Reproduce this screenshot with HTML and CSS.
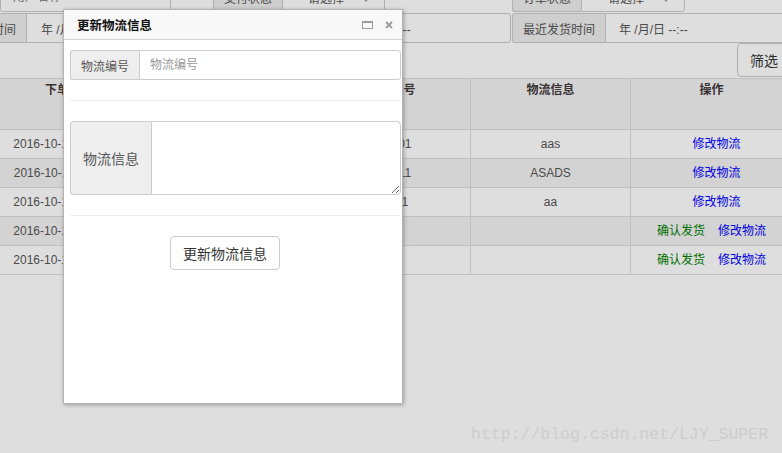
FILE: index.html
```
<!DOCTYPE html>
<html lang="zh-CN">
<head>
<meta charset="utf-8">
<title>订单管理</title>
<link rel="stylesheet" href="styles.css">
</head>
<body>
<div class="page">
  <div class="filters">
    <div class="frow r1">
      <input class="fc w-user" type="text" placeholder="用户名称">
      <div class="ig ig-pay">
        <span class="addon">支付状态</span>
        <span class="fc select">请选择<i class="caret"></i></span>
      </div>
      <div class="ig ig-order">
        <span class="addon">订单状态</span>
        <span class="fc select select-b">请选择<i class="caret"></i></span>
      </div>
    </div>
    <div class="frow r2">
      <div class="ig ig-time">
        <span class="addon">下单时间</span>
        <span class="fc date d1">年 /月/日 --:--</span>
        <span class="addon mid">至</span>
        <span class="fc date d2">年 /月/日 --:--</span>
      </div>
      <div class="ig ig-ship">
        <span class="addon">最近发货时间</span>
        <span class="fc date d3">年 /月/日 --:--</span>
      </div>
    </div>
    <div class="frow r3">
      <button class="btn btn-filter" type="button">筛选</button>
    </div>
  </div>

  <table class="grid">
    <thead>
      <tr>
        <th class="c1">下单时间</th>
        <th class="c2">用户名称</th>
        <th class="c3">物流编号</th>
        <th class="c4">物流信息</th>
        <th class="c5">操作</th>
      </tr>
    </thead>
    <tbody>
      <tr>
        <td>2016-10-12 10:23:45</td>
        <td>张三</td>
        <td>100001</td>
        <td>aas</td>
        <td><a class="op op-edit op-single">修改物流</a></td>
      </tr>
      <tr>
        <td>2016-10-12 11:02:10</td>
        <td>李四</td>
        <td>100011</td>
        <td>ASADS</td>
        <td><a class="op op-edit op-single">修改物流</a></td>
      </tr>
      <tr>
        <td>2016-10-13 09:15:32</td>
        <td>王五</td>
        <td>12341</td>
        <td>aa</td>
        <td><a class="op op-edit op-single">修改物流</a></td>
      </tr>
      <tr>
        <td>2016-10-14 14:20:05</td>
        <td>赵六</td>
        <td></td>
        <td></td>
        <td><a class="op op-confirm">确认发货</a><a class="op op-edit">修改物流</a></td>
      </tr>
      <tr>
        <td>2016-10-15 16:45:19</td>
        <td>孙七</td>
        <td></td>
        <td></td>
        <td><a class="op op-confirm">确认发货</a><a class="op op-edit">修改物流</a></td>
      </tr>
    </tbody>
  </table>
</div>

<div class="layer">
  <div class="layer-title">
    <span class="layer-name">更新物流信息</span>
    <span class="layer-ops">
      <svg class="ico-max" width="11" height="8" viewBox="0 0 11 8"><rect x="0.5" y="1" width="10" height="6.5" fill="none" stroke="#9c9c9c"/><rect x="0" y="0" width="11" height="2" fill="#9c9c9c"/></svg>
      <svg class="ico-close" width="8" height="8" viewBox="0 0 8 8"><path d="M1 1L7 7M7 1L1 7" stroke="#9c9c9c" stroke-width="1.8"/></svg>
    </span>
  </div>
  <div class="layer-body">
    <div class="ig ig-sm">
      <span class="lb-addon">物流编号</span>
      <input class="lb-input" type="text" placeholder="物流编号">
    </div>
    <hr>
    <div class="ig ig-lg">
      <span class="lb-addon">物流信息</span>
      <textarea class="lb-input" rows="3"></textarea>
    </div>
    <hr>
    <div class="actions">
      <button class="lb-btn" type="button">更新物流信息</button>
    </div>
  </div>
</div>

<div class="watermark">http://blog.csdn.net/LJY_SUPER</div>
</body>
</html>
```

FILE: styles.css
```
* { box-sizing: border-box; }
html, body { margin: 0; height: 100%; }
body {
  overflow: hidden;
  background: #dedede;
  font-family: "Liberation Sans", Arial, "Noto Sans CJK SC", sans-serif;
  font-size: 12px;
  color: #4a4a4a;
  position: relative;
}

/* background page (shown dimmed behind the dialog) */
.page { width: 792px; margin-top: -18px; }

.frow { display: flex; height: 30px; }
.r2 { margin-top: 1px; }
.r3 { height: 34px; justify-content: flex-end; padding-right: 1px; }

.ig { display: flex; height: 100%; }
.addon {
  display: flex;
  align-items: center;
  padding: 0 10px;
  background: #cfcfcf;
  border: 1px solid #b1b1b1;
  white-space: nowrap;
  color: #4a4a4a;
}
.fc {
  display: flex;
  align-items: center;
  border: 1px solid #b1b1b1;
  background: #dedede;
  padding: 0 10px;
  font: inherit;
  color: #4a4a4a;
  outline: none;
}
.fc::placeholder { color: #686868; }
.ig > .addon:first-child { border-right: 0; border-radius: 3px 0 0 3px; }
.ig > .fc:last-child { border-radius: 0 3px 3px 0; }
.addon.mid { border-left: 0; border-right: 0; width: 36px; justify-content: center; padding: 0; }

.w-user { width: 171px; height: 30px; border-radius: 3px; padding-left: 12px; }
.ig-pay { margin-left: 42px; }
.ig-order { margin-left: 127px; }
.select { position: relative; width: 103px; padding-left: 25px; }
.select-b { width: 104px; padding-left: 26px; }
.caret {
  position: absolute;
  right: 14px;
  top: 14px;
  border-top: 5px solid #858585;
  border-left: 4px solid transparent;
  border-right: 4px solid transparent;
}

.ig-time { margin-left: -43px; }
.d1 { width: 266px; padding-left: 14px; }
.d2 { width: 183px; padding-left: 13px; }
.ig-ship { margin-left: 1px; }
.d3 { width: 187px; padding-left: 13px; }

.btn {
  height: 34px;
  padding: 0 12px;
  border: 1px solid #b1b1b1;
  border-radius: 4px;
  background: #dedede;
  color: #2c2c2c;
  font-family: "Liberation Sans", Arial, "Noto Sans CJK SC", sans-serif;
  font-size: 14px;
}

.grid {
  width: 792px;
  table-layout: fixed;
  border-collapse: separate;
  border-spacing: 0;
  margin-top: 1px;
  border-top: 1px solid #c0c0c0;
}
.grid th, .grid td {
  border-bottom: 1px solid #c0c0c0;
  border-left: 1px solid #c0c0c0;
  text-align: center;
  white-space: nowrap;
  overflow: hidden;
}
.grid th:first-child, .grid td:first-child { border-left: 0; }
.grid th {
  height: 51px;
  padding: 3px 8px;
  line-height: 17px;
  vertical-align: top;
  background: #d3d3d3;
  color: #3a3232;
  font-weight: bold;
}
.grid td {
  height: 29px;
  padding: 5px 8px;
  line-height: 18px;
  color: #4a4a4a;
}
.grid tbody tr:nth-child(even) td { background: #d3d3d3; }
.c1 { width: 138px; }
.c2 { width: 174px; }
.c3 { width: 158px; }
.c4 { width: 160px; }
.c5 { width: 162px; }

.op { text-decoration: none; cursor: pointer; }
.op-edit { color: #0000de; }
.op-confirm { color: #006f00; margin-right: 13px; }
.op-single { margin-left: 10px; }

/* dialog */
.layer {
  position: absolute;
  z-index: 2;
  left: 63px;
  top: 9px;
  width: 340px;
  height: 395px;
  background: #ffffff;
  border: 1px solid #b4b4b4;
  box-shadow: 1px 1px 4px rgba(0, 0, 0, 0.3);
  display: flex;
  flex-direction: column;
}
.layer-title {
  height: 30px;
  flex: none;
  display: flex;
  align-items: center;
  justify-content: space-between;
  padding: 0 9px 0 13px;
  background: #f8f8f8;
  border-bottom: 1px solid #d3d3d3;
}
.layer-name {
  font-family: "Noto Sans CJK SC", sans-serif;
  font-size: 12.5px;
  font-weight: bold;
  color: #111;
}
.layer-ops { display: flex; align-items: center; gap: 12px; }
.ico-max, .ico-close { display: block; }

.layer-body { flex: 1; padding: 10px 1px 0 6px; background: #ffffff; }
.lb-addon {
  display: flex;
  align-items: center;
  padding: 0 10px;
  background: #eeeeee;
  border: 1px solid #cccccc;
  border-right: 0;
  border-radius: 4px 0 0 4px;
  white-space: nowrap;
  color: #555555;
}
.lb-input {
  flex: 1;
  min-width: 0;
  border: 1px solid #cccccc;
  border-radius: 0 4px 4px 0;
  background: #ffffff;
  padding: 0 10px;
  font: inherit;
  color: #555555;
  outline: none;
}
.lb-input::placeholder { color: #999999; }
.ig-sm { height: 30px; }
.ig-sm .lb-addon { border-radius: 3px 0 0 3px; }
.ig-sm .lb-input { height: 30px; border-radius: 0 3px 3px 0; }
.ig-lg { height: 74px; }
.ig-lg .lb-addon { font-size: 14px; padding: 0 12px; }
.ig-lg .lb-input {
  height: 74px;
  padding: 6px 12px;
  font-size: 14px;
  resize: vertical;
}
.layer-body hr {
  margin: 20px 0;
  border: 0;
  border-top: 1px solid #eeeeee;
}
.actions { padding-left: 100px; }
.lb-btn {
  height: 34px;
  padding: 0 12px;
  border: 1px solid #cccccc;
  border-radius: 4px;
  background: #ffffff;
  color: #333333;
  font-family: "Liberation Sans", Arial, "Noto Sans CJK SC", sans-serif;
  font-size: 14px;
}

.watermark {
  position: absolute;
  z-index: 3;
  left: 471px;
  top: 425px;
  font-family: "Liberation Mono", monospace;
  font-size: 16.5px;
  line-height: 20px;
  color: #cdcdcd;
}
```
